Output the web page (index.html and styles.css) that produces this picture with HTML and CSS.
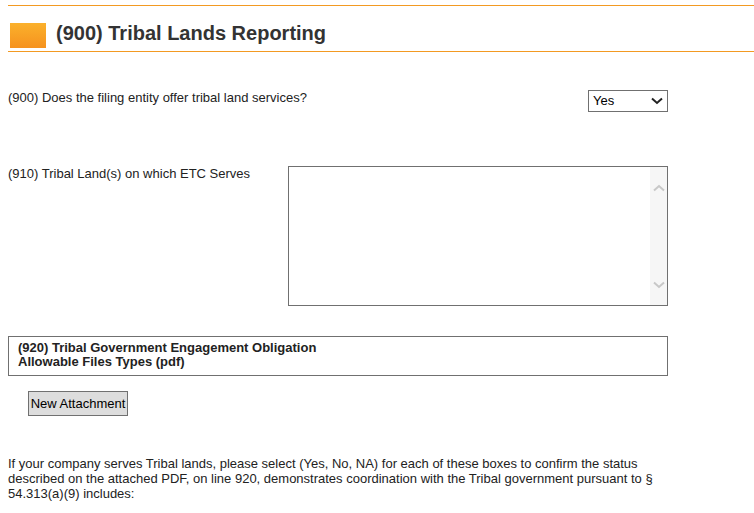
FILE: index.html
```html
<!DOCTYPE html>
<html>
<head>
<meta charset="utf-8">
<link rel="stylesheet" href="styles.css">
</head>
<body>
<div class="page">
  <div class="section-header">
    <div class="square"></div>
    <h1 class="title">(900) Tribal Lands Reporting</h1>
  </div>

  <div class="row row-900">
    <label class="label">(900) Does the filing entity offer tribal land services?</label>
    <div class="select">
      <span class="select-value">Yes</span>
      <svg class="select-arrow" width="12" height="8" viewBox="0 0 12 8"><path d="M1 1.5 L6 6 L11 1.5" fill="none" stroke="#222" stroke-width="2"/></svg>
    </div>
  </div>

  <div class="row row-910">
    <label class="label label-col">(910) Tribal Land(s) on which ETC Serves</label>
    <div class="textarea">
      <textarea class="textarea-input"></textarea>
      <div class="scrollbar">
        <svg width="12" height="8" viewBox="0 0 12 8"><path d="M1 6.5 L6 2 L11 6.5" fill="none" stroke="#c8c8c8" stroke-width="2"/></svg>
        <svg width="12" height="8" viewBox="0 0 12 8"><path d="M1 1.5 L6 6 L11 1.5" fill="none" stroke="#c8c8c8" stroke-width="2"/></svg>
      </div>
    </div>
  </div>

  <div class="attach-box">
    <div>(920) Tribal Government Engagement Obligation</div>
    <div>Allowable Files Types (pdf)</div>
  </div>

  <div class="button-row">
    <button class="btn">New Attachment</button>
  </div>

  <p class="note">If your company serves Tribal lands, please select (Yes, No, NA) for each of these boxes to confirm the status described on the attached PDF, on line 920, demonstrates coordination with the Tribal government pursuant to § 54.313(a)(9) includes:</p>
</div>
</body>
</html>
```

FILE: styles.css
```css
html, body {
  margin: 0;
  padding: 0;
  background: #fff;
}
body {
  font-family: "Liberation Sans", Arial, sans-serif;
  font-size: 13px;
  color: #222;
  overflow: hidden;
}
.page {
  padding-left: 8px;
  padding-top: 5px;
}
.section-header {
  display: flex;
  align-items: flex-start;
  gap: 10px;
  border-top: 1px solid #f39a22;
  border-bottom: 1px solid #f39a22;
  padding: 17px 0 3px 2px;
  height: 25px;
}
.square {
  width: 36px;
  height: 25px;
  background: linear-gradient(to bottom, #fbb12c, #f6921e);
  flex: none;
}
.title {
  margin: -1px 0 0;
  font-size: 20px;
  font-weight: bold;
  line-height: 22px;
  color: #333;
}
.row {
  display: flex;
  justify-content: space-between;
  align-items: flex-start;
  width: 660px;
}
.label {
  line-height: 15px;
}
.row-900 {
  margin-top: 38px;
}
.row-910 {
  margin-top: 54px;
}
.label-col {
  width: 280px;
}
.select {
  box-sizing: border-box;
  width: 80px;
  height: 22px;
  border: 1px solid #707070;
  display: flex;
  align-items: center;
  justify-content: space-between;
  padding: 0 4px 0 4px;
  background: #fff;
  color: #000;
}
.select-value {
  line-height: 18px;
}
.textarea {
  box-sizing: border-box;
  width: 380px;
  height: 140px;
  border: 1px solid #707070;
  display: flex;
}
.textarea-input {
  flex: 1;
  border: none;
  outline: none;
  resize: none;
  margin: 0;
  padding: 2px;
  font-family: inherit;
  font-size: 13px;
}
.scrollbar {
  width: 17px;
  background: #f6f6f6;
  display: flex;
  flex-direction: column;
  justify-content: space-between;
  align-items: center;
  padding: 17px 0 16px;
  box-sizing: border-box;
}
.attach-box {
  box-sizing: border-box;
  width: 660px;
  height: 40px;
  margin-top: 30px;
  border: 1px solid #707070;
  padding: 4px 9px 6px;
  font-weight: bold;
  line-height: 14px;
}
.button-row {
  margin-top: 15px;
  padding-left: 20px;
}
.btn {
  box-sizing: border-box;
  width: 100px;
  height: 25px;
  margin: 0;
  padding: 0 1px;
  border: 1px solid #707070;
  background: #dddddd;
  font-family: "Liberation Sans", Arial, sans-serif;
  font-size: 13px;
  color: #000;
  border-radius: 0;
}
.note {
  margin: 40px 0 0;
  width: 660px;
  line-height: 15px;
}
```
